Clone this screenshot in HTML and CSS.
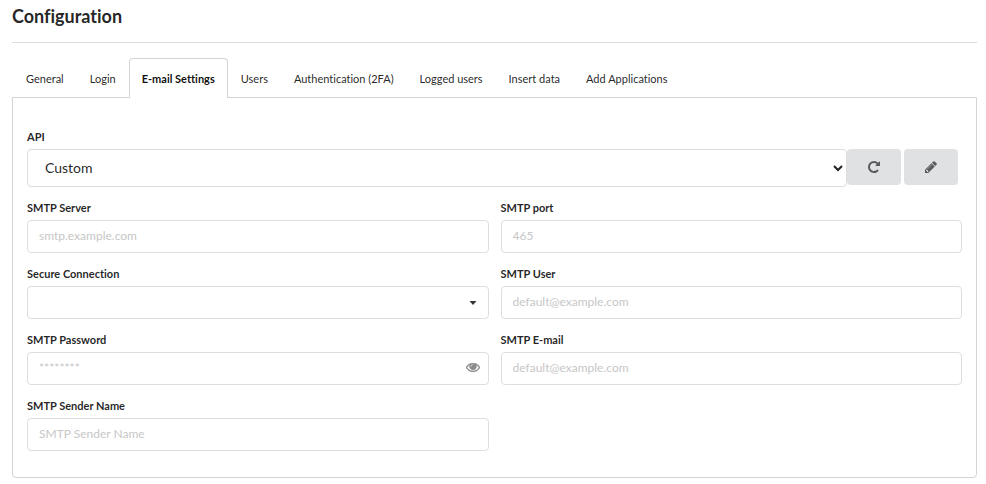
FILE: index.html
```html
<!DOCTYPE html>
<html lang="en">
<head>
    <meta charset="UTF-8">
    <meta name="viewport" content="width=device-width, initial-scale=1.0">
    <title>Configuration</title>
    <link rel="stylesheet" href="styles.css">
</head>
<body>
    <h1>Configuration</h1>

    <nav class="tabs">
        <a class="tab" href="#general">General</a>
        <a class="tab" href="#login">Login</a>
        <a class="tab active" href="#email">E-mail Settings</a>
        <a class="tab" href="#users">Users</a>
        <a class="tab" href="#authentication">Authentication (2FA)</a>
        <a class="tab" href="#logged">Logged users</a>
        <a class="tab" href="#insert">Insert data</a>
        <a class="tab" href="#applications">Add Applications</a>
    </nav>

    <form class="panel" id="email">
        <div class="field wide">
            <label for="api">API</label>
            <div class="api-row">
                <select id="api" class="api-select">
                    <option>Custom</option>
                </select>
                <div class="api-buttons">
                    <button type="button" class="icon-btn" aria-label="Refresh">
                        <svg width="12" height="12" viewBox="0 0 1536 1536"><path d="M1536 128v448q0 26-19 45t-45 19h-448q-42 0-59-40-17-39 14-69l138-138q-148-137-349-137-104 0-198.500 40.500t-163.500 109.500-109.500 163.500-40.500 198.500 40.500 198.500 109.500 163.500 163.500 109.500 198.500 40.500q119 0 225-52t179-147q7-10 23-12 15 0 25 9l137 138q9 8 9.500 20.500t-7.500 22.500q-109 132-264 204.500t-327 72.500q-156 0-298-61t-245-164-164-245-61-298 61-298 164-245 245-164 298-61q147 0 284.500 55.500t244.500 156.500l130-129q29-31 70-14 39 17 39 59z"/></svg>
                    </button>
                    <button type="button" class="icon-btn" aria-label="Edit">
                        <svg width="12" height="12" viewBox="0 0 1536 1536"><path d="M363 1408l91-91-235-235-91 91v107h128v128h107zm523-928q0-22-22-22-10 0-17 7l-542 542q-7 7-7 17 0 22 22 22 10 0 17-7l542-542q7-7 7-17zm-54-192l416 416-832 832h-416v-416zm683 96q0 53-37 90l-166 166-416-416 166-165q36-38 90-38 53 0 91 38l235 234q37 39 37 91z"/></svg>
                    </button>
                </div>
            </div>
        </div>

        <div class="field">
            <label for="server">SMTP Server</label>
            <input type="text" id="server" placeholder="smtp.example.com">
        </div>
        <div class="field">
            <label for="port">SMTP port</label>
            <input type="text" id="port" placeholder="465">
        </div>

        <div class="field">
            <label for="secure">Secure Connection</label>
            <div class="control">
                <select id="secure" class="secure-select">
                    <option></option>
                    <option>SSL</option>
                    <option>TLS</option>
                </select>
                <svg class="caret" width="8" height="4" viewBox="0 0 8 4"><path d="M0.500 0h7L4 4z"/></svg>
            </div>
        </div>
        <div class="field">
            <label for="user">SMTP User</label>
            <input type="text" id="user" placeholder="default@example.com">
        </div>

        <div class="field">
            <label for="password">SMTP Password</label>
            <div class="control">
                <input type="password" id="password" placeholder="********">
                <svg class="eye" width="14" height="9" viewBox="0 0 1792 1152"><path d="M1664 576q-152-236-381-353 61 104 61 225 0 185-131.500 316.500t-316.500 131.500-316.500-131.500-131.500-316.500q0-121 61-225-229 117-381 353 133 205 333.500 326.500t434.500 121.500 434.500-121.500 333.500-326.500zm-720-384q0-20-14-34t-34-14q-125 0-214.500 89.500t-89.500 214.500q0 20 14 34t34 14 34-14 14-34q0-86 61-147t147-61q20 0 34-14t14-34zm848 384q0 34-20 69-140 230-376.500 368.500t-499.500 138.500-499.500-139-376.500-368q-20-35-20-69t20-69q140-229 376.500-368t499.500-139 499.500 139 376.500 368q20 35 20 69z"/></svg>
            </div>
        </div>
        <div class="field">
            <label for="mail">SMTP E-mail</label>
            <input type="text" id="mail" placeholder="default@example.com">
        </div>

        <div class="field">
            <label for="sender">SMTP Sender Name</label>
            <input type="text" id="sender" placeholder="SMTP Sender Name">
        </div>
    </form>
</body>
</html>
```
FILE: styles.css
```css
* {
    box-sizing: border-box;
}
body {
    margin: 0;
    padding: 4px 9px 6px 12px;
    font-family: Lato, "Liberation Sans", sans-serif;
    font-size: 11px;
    font-variant-ligatures: none;
    color: rgba(0, 0, 0, 0.87);
    background-color: #fff;
}
h1 {
    margin: 0 0 15px;
    padding-bottom: 14px;
    border-bottom: 1px solid #dcdcdd;
    font-size: 18px;
    line-height: 24px;
    font-weight: bold;
}

/* tabs */
.tabs {
    display: flex;
    padding-left: 1px;
}
.tab {
    padding: 12px 12px 10px;
    border: 1px solid transparent;
    border-bottom: none;
    line-height: 16px;
    white-space: nowrap;
    color: inherit;
    text-decoration: none;
}
.tab.active {
    margin-bottom: -1px;
    border-color: #d4d4d5;
    border-radius: 4px 4px 0 0;
    background-color: #fff;
    color: rgba(0, 0, 0, 0.95);
    font-weight: bold;
    position: relative;
}

/* form */
.panel {
    display: grid;
    grid-template-columns: 1fr 1fr;
    gap: 13px 12px;
    padding: 31px 14px 26px;
    border: 1px solid #d4d4d5;
    border-radius: 0 0 4px 4px;
}
.wide {
    grid-column: 1 / 3;
}
label {
    display: block;
    margin-bottom: 4px;
    line-height: 16px;
    font-weight: bold;
}
input, select {
    display: block;
    width: 100%;
    height: 33px;
    padding: 0 11px 2px;
    border: 1px solid #dededf;
    border-radius: 4px;
    background-color: #fff;
    font-family: inherit;
    font-size: 12px;
    color: inherit;
}
input::placeholder {
    color: #c7c7c7;
}
.control {
    position: relative;
}
.secure-select {
    appearance: none;
}
.caret, .eye {
    position: absolute;
    top: 0;
    bottom: 0;
    margin: auto;
    pointer-events: none;
}
.caret {
    right: 12px;
    fill: #333;
}
.eye {
    right: 9px;
    bottom: 2px;
    fill: #8c8c8c;
    stroke: #8c8c8c;
    stroke-width: 50;
}

.api-row {
    display: flex;
    padding-right: 4px;
}
.api-select {
    flex: 1;
    height: 38px;
    padding: 0 0 1px 13px;
    font-size: 14px;
}
.api-buttons {
    display: flex;
    align-items: flex-start;
    gap: 3px;
}
.icon-btn {
    display: flex;
    align-items: center;
    justify-content: center;
    width: 54px;
    height: 36px;
    padding: 0;
    border: none;
    border-radius: 4px;
    background-color: #e0e1e2;
    cursor: pointer;
}
.icon-btn:hover {
    background-color: #cacbcd;
}
.icon-btn svg {
    fill: #5a5a5b;
}
```
